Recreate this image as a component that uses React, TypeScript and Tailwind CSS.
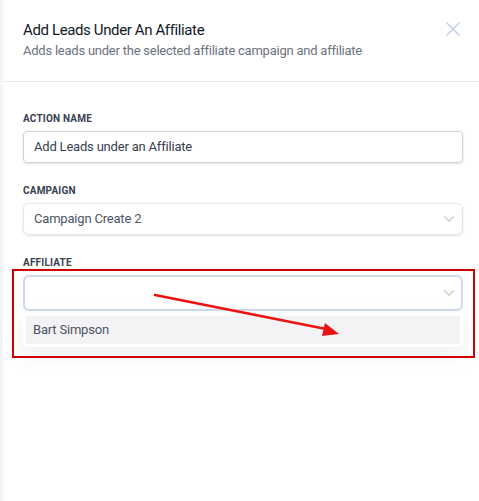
import { X, ChevronDown } from 'lucide-react';

function Label({ children }: { children: string }) {
  return (
    <p className="mb-[5px] text-[10px] font-bold uppercase leading-[15px] tracking-[0.02em] text-[#374151]">
      {children}
    </p>
  );
}

export default function App() {
  return (
    <div className="flex h-[501px] w-[479px] bg-[#f3f3f8] font-['Roboto',sans-serif]">
      <div className="ml-[3px] flex flex-1 flex-col bg-white">
        <header className="relative flex h-[82px] flex-col border-b border-[#e5e7eb] pl-5 pr-4 pt-[20px]">
          <h1 className="text-[15px] leading-[20px] tracking-[-0.025em] text-[#111827]">Add Leads Under An Affiliate</h1>
          <p className="mt-[2px] text-[13px] leading-[18px] tracking-[-0.018em] text-[#6b7280]">
            Adds leads under the selected affiliate campaign and affiliate
          </p>
          <X className="absolute right-[14px] top-[17px] h-6 w-6 text-[#c3cbef]" strokeWidth={1.5} />
        </header>

        <div className="flex flex-col pl-5 pr-4 pt-[29px]">
          <Label>Action Name</Label>
          <div className="flex h-[32px] items-center rounded-[4px] border border-[#d1d5db] px-[10px] text-[13px] tracking-[-0.015em] text-[#374151] shadow-sm">
            Add Leads under an Affiliate
          </div>

          <div className="mt-[20px]">
            <Label>Campaign</Label>
            <div className="flex h-[32px] items-center justify-between rounded-[6px] border border-[#e5e7eb] pl-[10px] pr-[4px] text-[13px] tracking-[-0.015em] text-[#4b5563] shadow-sm">
              <span>Campaign Create 2</span>
              <ChevronDown className="h-[18px] w-[18px] text-[#c8c8cc]" strokeWidth={1.5} />
            </div>
          </div>

          <div className="mt-[20px]">
            <Label>Affiliate</Label>
            <div className="relative">
              <div className="flex h-[36px] items-center justify-end rounded-[6px] border-2 border-[#cfd9ec] pr-[3px]">
                <ChevronDown className="h-[18px] w-[18px] text-[#c8c8cc]" strokeWidth={1.5} />
              </div>
              <div className="mt-[2px] rounded-[4px] bg-white p-[3px] shadow-[0_8px_24px_rgba(0,0,0,0.07)]">
                <div className="flex h-[28px] items-center rounded-[2px] bg-[#f3f3f5] px-[7px] text-[13px] tracking-[-0.015em] text-[#4b5563]">
                  Bart Simpson
                </div>
              </div>
              <div className="pointer-events-none absolute -bottom-[11px] -left-[11px] -right-[12px] -top-[6px] border-2 border-[#d00000]" />
              <svg
                className="pointer-events-none absolute left-[125px] top-[14px] h-[50px] w-[200px] overflow-visible"
                viewBox="0 0 200 50"
              >
                <line x1="7" y1="6" x2="178" y2="40" stroke="#ee1111" strokeWidth="2.5" strokeLinecap="round" />
                <polygon points="191,45 174,47 177,34" fill="#ee1111" />
              </svg>
            </div>
          </div>
        </div>
      </div>
    </div>
  );
}
